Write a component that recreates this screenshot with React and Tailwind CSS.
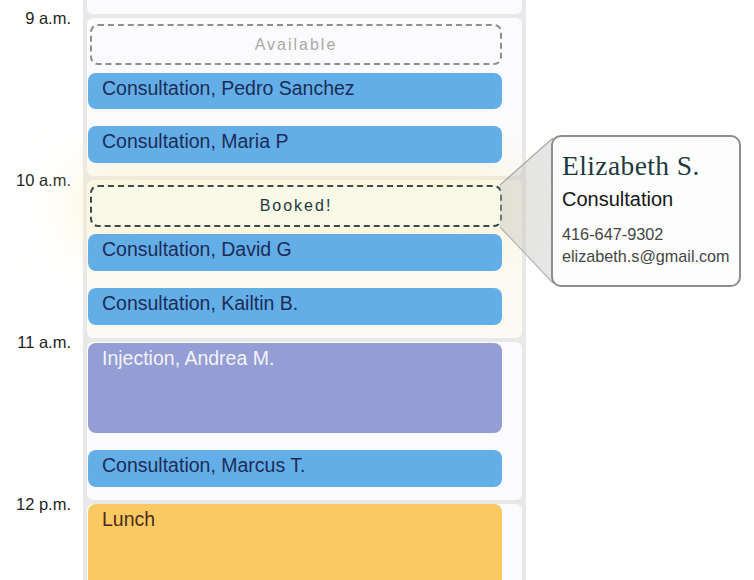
export default function App() {
  const hours = ["9 a.m.", "10 a.m.", "11 a.m.", "12 p.m."];

  return (
    <div
      className="relative flex h-[580px] w-[754px] overflow-hidden bg-white"
      style={{ fontFamily: '"Liberation Sans", Arial, sans-serif' }}
    >
      {/* time labels */}
      <div className="flex w-[83px] shrink-0 flex-col pt-[8px] pr-[12px] text-right">
        {hours.map((h) => (
          <div key={h} className="h-[162px] shrink-0 text-[16.5px] leading-5 text-[#1f1f1f]">
            {h}
          </div>
        ))}
      </div>

      {/* day column */}
      <div className="flex w-[443px] shrink-0 flex-col gap-[4px] bg-[#e8e8e9] px-[4px]">
        <div className="h-[14px] shrink-0 rounded-b-md bg-[#fbfbfd]" />

        {/* 9 */}
        <div className="flex h-[158px] shrink-0 flex-col rounded-md bg-[#fbfbfd] pt-[6px] pr-[20px] pl-[1px]">
          <div className="ml-[2px] flex h-[41px] shrink-0 items-center justify-center rounded-lg border-2 border-dashed border-[#8f8f8f] bg-[#fbfbfd] text-[16px] tracking-[2px] text-[#a9a9a9]">
            Available
          </div>
          <Bar className="mt-[8px] h-[36px]">Consultation, Pedro Sanchez</Bar>
          <Bar className="mt-[17px] h-[37px]">Consultation, Maria P</Bar>
        </div>

        {/* 10 */}
        <div className="flex h-[158px] shrink-0 flex-col rounded-md bg-[#fbfbf4] pt-[5px] pr-[20px] pl-[1px]">
          <div className="ml-[2px] flex h-[42px] shrink-0 items-center justify-center rounded-lg border-2 border-dashed border-[#3c4a4c] bg-[#f8f9e6] text-[16px] tracking-[2px] text-[#1f383d] shadow-[0_0_50px_16px_rgba(252,240,190,0.6)]">
            Booked!
          </div>
          <Bar className="mt-[7px] h-[37px]">Consultation, David G</Bar>
          <Bar className="mt-[17px] h-[37px]">Consultation, Kailtin B.</Bar>
        </div>

        {/* 11 */}
        <div className="flex h-[158px] shrink-0 flex-col rounded-md bg-[#fbfbfd] pt-[1px] pr-[20px] pl-[1px]">
          <div className="relative h-[90px] shrink-0 rounded-lg bg-[#949dd4] pt-[3px] pl-[14px] text-[19.5px] leading-6 text-[#f2f3fb]">
            Injection, Andrea M.
          </div>
          <Bar className="mt-[17px] h-[37px]">Consultation, Marcus T.</Bar>
        </div>

        {/* 12 */}
        <div className="flex h-[120px] shrink-0 flex-col rounded-md bg-[#fbfbfd] pr-[20px] pl-[1px]">
          <div className="relative h-[110px] shrink-0 rounded-lg bg-[#fbc961] pt-[3px] pl-[14px] text-[19.5px] leading-6 text-[#4b2b1f]">
            Lunch
          </div>
        </div>
      </div>

      {/* pointer wedge */}
      <svg
        className="pointer-events-none absolute top-0 left-0"
        width="754"
        height="580"
        viewBox="0 0 754 580"
      >
        <polygon points="500,185 553,138 553,283 500,227" fill="rgba(190,190,190,0.38)" />
        <line x1="500" y1="185" x2="553" y2="138" stroke="#a9a9a9" strokeWidth="1.2" />
        <line x1="500" y1="227" x2="553" y2="283" stroke="#b5b5b5" strokeWidth="1.2" />
      </svg>

      {/* detail card */}
      <div className="absolute top-[135px] left-[551px] h-[152px] w-[190px] rounded-[10px] border-2 border-[#8d8d8d] bg-[#fdfdfd] pt-[13px] pl-[9px]">
        <div
          className="text-[27.5px] leading-8 tracking-[0.4px] text-[#1d3a40]"
          style={{ fontFamily: '"Liberation Serif", "Times New Roman", serif' }}
        >
          Elizabeth S.
        </div>
        <div className="mt-[5px] text-[20px] leading-6 text-[#151515]">Consultation</div>
        <div className="mt-[12px] text-[16.3px] leading-[22px] text-[#464646]">416-647-9302</div>
        <div className="text-[16.2px] leading-[22px] text-[#464646]">elizabeth.s@gmail.com</div>
      </div>
    </div>
  );
}

function Bar({ className, children }) {
  return (
    <div
      className={
        "relative shrink-0 rounded-lg bg-[#64aee8] pt-[3px] pl-[14px] text-[19.5px] leading-6 text-[#1b2d57] " +
        className
      }
    >
      {children}
    </div>
  );
}
